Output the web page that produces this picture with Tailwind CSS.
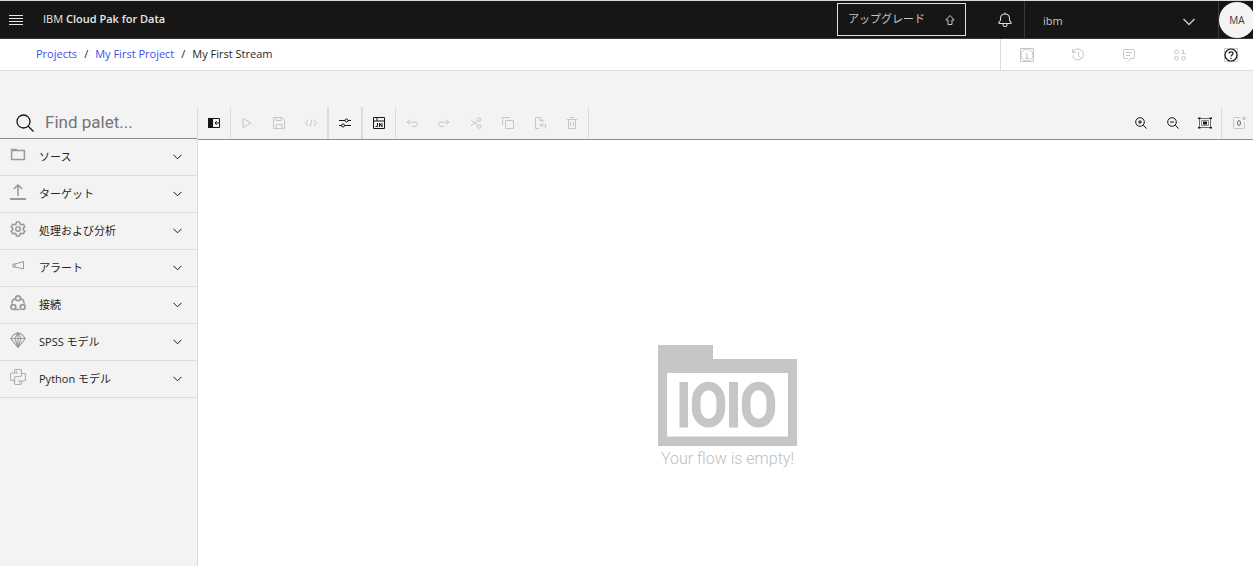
<!DOCTYPE html>
<html lang="ja">
<head>
    <meta charset="UTF-8">
    <meta name="viewport" content="width=device-width, initial-scale=1.0">
    <title>My First Stream</title>
    <script src="https://cdn.jsdelivr.net/npm/@tailwindcss/browser@4"></script>
</head>
<body class="h-screen flex flex-col overflow-hidden bg-[#f3f3f3] text-[#262626] text-[11px] font-['Open_Sans','Noto_Sans_CJK_JP',sans-serif]">
    <!-- ヘッダー -->
    <header class="flex items-stretch h-[39px] shrink-0 bg-[#161616] border-t border-t-[#d5dbd8] border-b border-b-[#393939] text-[#e8e8e8]">
        <button type="button" aria-label="メニュー" class="w-8 flex items-center justify-center">
            <svg class="w-[14px] h-[10px]" viewBox="0 0 14 10" stroke="currentColor"><path d="M0 .5h14M0 3.500h14M0 6.500h14M0 9.500h14"/></svg>
        </button>
        <a href="#" class="flex items-center pl-[11px]">IBM&nbsp;<b class="font-semibold">Cloud Pak for Data</b></a>
        <div class="ml-auto flex items-stretch">
            <button type="button" class="my-[2px] w-[129px] flex items-center justify-between border border-[#e0e0e0] pl-[10px] pr-[9px] text-[#c6c6c6]">
                <span>アップグレード</span>
                <svg class="size-3" viewBox="0 0 12 12" fill="none" stroke="currentColor"><path d="M6 1.500L1.800 6H4v4.500h4V6h2.200z"/></svg>
            </button>
            <button type="button" aria-label="通知" class="w-[58px] pl-5 flex items-center justify-center text-[#e0e0e0]">
                <svg class="size-4" viewBox="0 0 32 32" fill="currentColor"><path d="M28.700 19.300L26 16.600V13a10 10 0 0 0-9-9.950V1h-2v2.050A10 10 0 0 0 6 13v3.600l-2.700 2.700A1 1 0 0 0 3 20v3a1 1 0 0 0 1 1h7v1a5 5 0 0 0 10 0v-1h7a1 1 0 0 0 1-1v-3a1 1 0 0 0-.3-.7zM19 25a3 3 0 0 1-6 0v-1h6zm8-3H5v-1.600l2.700-2.700A1 1 0 0 0 8 17v-4a8 8 0 0 1 16 0v4a1 1 0 0 0 .3.7l2.700 2.700z"/></svg>
            </button>
            <button type="button" class="w-[195px] flex items-center justify-between border-x border-[#393939] pl-[18px] pr-[23px] pt-1 text-[#c6c6c6]">
                <span>ibm</span>
                <svg class="w-3 h-2" viewBox="0 0 12 8" fill="none" stroke="currentColor" stroke-width="1.500"><path d="M.5 1L6 6.500 11.500 1"/></svg>
            </button>
            <button type="button" class="-mr-[2px] mt-px size-9 rounded-full bg-[#f4f4f4] text-[#393939] text-[10px]">MA</button>
        </div>
    </header>

    <!-- パンくず -->
    <div class="flex items-stretch justify-between h-8 shrink-0 bg-white border-b border-[#dcdcdc]">
        <nav aria-label="Breadcrumb" class="flex items-center gap-[7px] pl-9">
            <a href="#" class="text-[#3d4fe8]">Projects</a>
            <span>/</span>
            <a href="#" class="text-[#3d4fe8]">My First Project</a>
            <span>/</span>
            <span>My First Stream</span>
        </nav>
        <div class="flex items-center gap-[37px] border-l border-[#dcdcdc] pl-[19px] pr-[15px] text-[#c6c6c6]">
            <button type="button" aria-label="情報">
                <svg class="size-[14px]" viewBox="0 0 14 14" fill="none" stroke="currentColor"><path d="M.5.5h13v13H.5z"/><circle cx="7" cy="7" r="6"/><path d="M5.500 6H7v4M5 10.500h4M6.500 4h1"/></svg>
            </button>
            <button type="button" aria-label="履歴">
                <svg class="size-[14px]" viewBox="0 0 14 14" fill="none" stroke="currentColor"><path d="M2 4a5.500 5.500 0 1 1-.5 3.500M1.500 1v3.500H5M7.500 3.500V7.500L10 10"/></svg>
            </button>
            <button type="button" aria-label="コメント">
                <svg class="size-[14px]" viewBox="0 0 14 14" fill="none" stroke="currentColor"><path d="M6.500 12.800L8.200 10.500H11.500a1 1 0 0 0 1-1V2.500a1 1 0 0 0-1-1h-9a1 1 0 0 0-1 1v7a1 1 0 0 0 1 1H6M4 4.500h6M4 7.500h4"/></svg>
            </button>
            <button type="button" aria-label="データ">
                <svg class="size-[14px]" viewBox="0 0 14 14" fill="none" stroke="currentColor"><circle cx="3.500" cy="3.700" r="1.900"/><circle cx="3.500" cy="10.300" r="1.900"/><circle cx="10.500" cy="10.300" r="1.900"/><path d="M9 2.500h1.500V6M8.500 5.500h4"/></svg>
            </button>
            <button type="button" aria-label="ヘルプ">
                <svg class="size-[14px]" viewBox="0 0 14 14" fill="none" stroke="currentColor"><path d="M.5.5h13v13H.5z"/><g stroke="#161616" stroke-width="1.200"><circle cx="7" cy="7" r="6"/><path d="M5 5.500C5 3.200 9 3.200 9 5.500 9 7 7 6.800 7 8.500M7 9.700v1.200"/></g></svg>
            </button>
        </div>
    </div>

    <div class="flex flex-1 min-h-0 pt-9">
        <!-- パレット -->
        <aside class="w-[198px] shrink-0 border-r border-[#dcdcdc]">
            <div class="flex items-center h-8 border-b border-[#8d8d8d] pl-4">
                <svg class="size-[18px] shrink-0" viewBox="0 0 18 18" fill="none" stroke="#161616" stroke-width="1.300"><circle cx="7.500" cy="7.500" r="6.500"/><path d="M12.200 12.200L17.500 17.500"/></svg>
                <input type="search" aria-label="Find palette" placeholder="Find palet..." class="min-w-0 flex-1 ml-[11px] bg-transparent font-['Roboto',sans-serif] text-[17px] outline-none placeholder:text-[#757575]">
            </div>
            <ul>
                <li class="h-[37px] border-b border-[#dcdcdc]">
                    <button type="button" class="size-full flex items-center pl-[10px] pr-[15px]">
                        <svg class="size-4 mb-1" viewBox="0 0 16 16" fill="none" stroke="#9a9a9a" stroke-width="1.500"><path d="M1.600 3.600h12.800v9H1.600zM1.600 3.600V2.400h4.500l1 1.200"/></svg>
                        <span class="ml-[13px]">ソース</span>
                        <svg class="w-[9px] h-[6px] ml-auto" viewBox="0 0 9 6" fill="none" stroke="#161616"><path d="M.5.8l4 4 4-4"/></svg>
                    </button>
                </li>
                <li class="h-[37px] border-b border-[#dcdcdc]">
                    <button type="button" class="size-full flex items-center pl-[10px] pr-[15px]">
                        <svg class="size-4 mb-1" viewBox="0 0 16 16" fill="none" stroke="#9a9a9a" stroke-width="1.600"><path d="M8 12V1.200M3.800 5L8 1l4.200 4"/><path d="M0 15h16" stroke-width="2"/></svg>
                        <span class="ml-[13px]">ターゲット</span>
                        <svg class="w-[9px] h-[6px] ml-auto" viewBox="0 0 9 6" fill="none" stroke="#161616"><path d="M.5.8l4 4 4-4"/></svg>
                    </button>
                </li>
                <li class="h-[37px] border-b border-[#dcdcdc]">
                    <button type="button" class="size-full flex items-center pl-[10px] pr-[15px]">
                        <svg class="size-4 mb-1" viewBox="0 0 16 16" fill="none" stroke="#9a9a9a" stroke-width="1.600" stroke-linejoin="round"><path d="M6.500 1h3l.5 2 1.300.8 2-.6 1.500 2.600L13.300 7.200v1.600l1.500 1.400-1.500 2.600-2-.6-1.300.8-.5 2h-3l-.5-2-1.300-.8-2 .6-1.500-2.600 1.500-1.400V7.200L1.200 5.800l1.500-2.600 2 .6L6 3z"/><circle cx="8" cy="8" r="2.200"/></svg>
                        <span class="ml-[13px]">処理および分析</span>
                        <svg class="w-[9px] h-[6px] ml-auto" viewBox="0 0 9 6" fill="none" stroke="#161616"><path d="M.5.8l4 4 4-4"/></svg>
                    </button>
                </li>
                <li class="h-[37px] border-b border-[#dcdcdc]">
                    <button type="button" class="size-full flex items-center pl-[10px] pr-[15px]">
                        <svg class="size-4 mb-1" viewBox="0 0 16 16" fill="none" stroke="#9a9a9a"><path d="M13.500 3.500v7.500L5 9H3V6h2zM5 6v3"/></svg>
                        <span class="ml-[13px]">アラート</span>
                        <svg class="w-[9px] h-[6px] ml-auto" viewBox="0 0 9 6" fill="none" stroke="#161616"><path d="M.5.8l4 4 4-4"/></svg>
                    </button>
                </li>
                <li class="h-[37px] border-b border-[#dcdcdc]">
                    <button type="button" class="size-full flex items-center pl-[10px] pr-[15px]">
                        <svg class="size-4 mb-1" viewBox="0 0 16 16" fill="none" stroke="#9a9a9a" stroke-width="1.700"><circle cx="8" cy="3.300" r="2.400"/><circle cx="3.300" cy="12" r="2.400"/><circle cx="12.700" cy="12" r="2.400"/><path d="M4.700 3.500Q1.800 5.500 1.600 8.500M11.300 3.500Q14.200 5.500 14.400 8.500M4 14.500h5.500"/></svg>
                        <span class="ml-[13px]">接続</span>
                        <svg class="w-[9px] h-[6px] ml-auto" viewBox="0 0 9 6" fill="none" stroke="#161616"><path d="M.5.8l4 4 4-4"/></svg>
                    </button>
                </li>
                <li class="h-[37px] border-b border-[#dcdcdc]">
                    <button type="button" class="size-full flex items-center pl-[10px] pr-[15px]">
                        <svg class="size-4 mb-1" viewBox="0 0 16 16" fill="none" stroke="#9a9a9a" stroke-width="1.100"><path d="M.7 6.500L4 2.500 8 .6l4 1.900 3.300 4L8 15.500zM.7 6.500h14.600M8 .6L5 6.500l3 9 3-9zM8 .6v15"/></svg>
                        <span class="ml-[13px]">SPSS モデル</span>
                        <svg class="w-[9px] h-[6px] ml-auto" viewBox="0 0 9 6" fill="none" stroke="#161616"><path d="M.5.8l4 4 4-4"/></svg>
                    </button>
                </li>
                <li class="h-[37px] border-b border-[#dcdcdc]">
                    <button type="button" class="size-full flex items-center pl-[10px] pr-[15px]">
                        <svg class="size-4 mb-1" viewBox="0 0 16 16" fill="none" stroke="#b0b0b0" stroke-width="1.200"><path d="M8 4H4.500V2Q4.500.5 6 .5h4q1.500 0 1.500 1.500v4q0 1.500-1.500 1.500H6Q4.500 7.500 4.500 9v2.500H2Q.5 11.500.5 10V5.500Q.5 4 2 4h3M8 12h3.500v2q0 1.500-1.500 1.500H6q-1.500 0-1.500-1.500v-3M11.500 4.500H14q1.500 0 1.500 1.500v4.500q0 1.500-1.500 1.500h-3M6 2.300h1M9 13.700h1"/></svg>
                        <span class="ml-[13px]">Python モデル</span>
                        <svg class="w-[9px] h-[6px] ml-auto" viewBox="0 0 9 6" fill="none" stroke="#161616"><path d="M.5.8l4 4 4-4"/></svg>
                    </button>
                </li>
            </ul>
        </aside>

        <div class="flex-1 min-w-0 flex flex-col">
            <!-- ツールバー -->
            <div class="flex items-stretch h-[33px] shrink-0 border-b border-[#8d8d8d] text-[#c6c6c6]">
                <button type="button" aria-label="パレットを閉じる" class="w-[33px] flex items-center justify-center border-r border-[#dcdcdc] text-[#161616]">
                    <svg class="w-3 h-[10px]" viewBox="0 0 12 10"><path d="M0 0h5v10H0z" fill="currentColor"/><path d="M5 .5h6.500v9H5M11 5H7M8.700 3.200L7 5l1.700 1.800" fill="none" stroke="currentColor"/></svg>
                </button>
                <button type="button" aria-label="実行" class="w-8 flex items-center justify-center">
                    <svg class="size-3" viewBox="0 0 12 12" fill="none" stroke="currentColor"><path d="M2 1.500v9L10 6z"/></svg>
                </button>
                <button type="button" aria-label="保存" class="w-8 flex items-center justify-center">
                    <svg class="size-3" viewBox="0 0 12 12" fill="none" stroke="currentColor"><path d="M.5.5H9L11.500 3v8.500H.5zM3 .5v3h5v-3M3 11.500v-4h6v4"/></svg>
                </button>
                <button type="button" aria-label="コード" class="w-[34px] flex items-center justify-center border-r-2 border-[#dcdcdc]">
                    <svg class="size-3" viewBox="0 0 12 12" fill="none" stroke="currentColor"><path d="M3 3L.6 6 3 9M9 3l2.400 3L9 9M7 2.500l-2 7"/></svg>
                </button>
                <button type="button" aria-label="設定" class="w-[34px] flex items-center justify-center border-r-2 border-[#dcdcdc] text-[#161616]">
                    <svg class="size-3" viewBox="0 0 12 12" fill="none" stroke="currentColor"><path d="M0 3.500h6M9 3.500h3M0 8.500h2.500M5.500 8.500H12"/><circle cx="7.500" cy="3.500" r="1.500"/><circle cx="4" cy="8.500" r="1.500"/></svg>
                </button>
                <button type="button" aria-label="ノートブック" class="w-[33px] flex items-center justify-center border-r border-[#dcdcdc] text-[#161616]">
                    <svg class="size-3" viewBox="0 0 12 12" fill="none" stroke="currentColor"><path d="M.5.5h11v11H.5zM.5 4h11M4 .5V4M4.500 6v3.500h-2M6.500 10V6L9 10V6"/></svg>
                </button>
                <button type="button" aria-label="元に戻す" class="w-8 flex items-center justify-center">
                    <svg class="size-3" viewBox="0 0 12 12" fill="none" stroke="currentColor"><path d="M3.500 2.500L1 5l2.500 2.500M1 5h8q2.500.2 2.500 2.200T9 9.500H6"/></svg>
                </button>
                <button type="button" aria-label="やり直し" class="w-8 flex items-center justify-center">
                    <svg class="size-3" viewBox="0 0 12 12" fill="none" stroke="currentColor"><path d="M8.500 2.500L11 5 8.500 7.500M11 5H3Q.5 5.200.5 7.200T3 9.500h3"/></svg>
                </button>
                <button type="button" aria-label="切り取り" class="w-8 flex items-center justify-center">
                    <svg class="size-3" viewBox="0 0 12 12" fill="none" stroke="currentColor"><circle cx="9.300" cy="2.500" r="1.700"/><circle cx="9.300" cy="9.500" r="1.700"/><path d="M1 3l7 5.500M1 9l7-5.500"/></svg>
                </button>
                <button type="button" aria-label="コピー" class="w-8 flex items-center justify-center">
                    <svg class="size-3" viewBox="0 0 12 12" fill="none" stroke="currentColor"><path d="M3.500 3.500h8v8h-8zM.5 8V.5H8"/></svg>
                </button>
                <button type="button" aria-label="貼り付け" class="w-8 flex items-center justify-center">
                    <svg class="size-3" viewBox="0 0 12 12" fill="none" stroke="currentColor"><path d="M5 11.500H1.500V.5H6L9 3.500V5M6 .5v3h3M8 6L6 8l2 2M6 8h5.500v3.500"/></svg>
                </button>
                <button type="button" aria-label="削除" class="w-[33px] flex items-center justify-center border-r border-[#dcdcdc]">
                    <svg class="size-3" viewBox="0 0 12 12" fill="none" stroke="currentColor"><path d="M1 2.500h10M4 .5h4M2.500 2.500v9h7v-9M4.500 5v4M7.500 5v4"/></svg>
                </button>
                <div class="ml-auto flex items-stretch text-[#161616]">
                    <button type="button" aria-label="拡大" class="w-8 flex items-center justify-center">
                        <svg class="size-3" viewBox="0 0 12 12" fill="none" stroke="currentColor"><circle cx="5" cy="5" r="4.300"/><path d="M8.200 8.200l3.400 3.400M3 5h4M5 3v4"/></svg>
                    </button>
                    <button type="button" aria-label="縮小" class="w-8 flex items-center justify-center">
                        <svg class="size-3" viewBox="0 0 12 12" fill="none" stroke="currentColor"><circle cx="5" cy="5" r="4.300"/><path d="M8.200 8.200l3.400 3.400M3 5h4"/></svg>
                    </button>
                    <button type="button" aria-label="全体表示" class="w-[33px] flex items-center justify-center border-r border-[#dcdcdc]">
                        <svg class="w-[14px] h-3" viewBox="0 0 14 12"><path d="M1.500 1.500h11v9h-11z" fill="none" stroke="#6f6f6f"/><path d="M3.500 3.500h7v5h-7z" fill="none" stroke="#8d8d8d"/><path d="M5 4.500h4v3H5zM0 .5h2.500V2H0zM11.500.5H14V2h-2.500zM0 10h2.500v1.500H0zM11.500 10H14v1.500h-2.500z" fill="currentColor"/></svg>
                    </button>
                    <button type="button" aria-label="通知 0 件" class="w-[31px] pl-[3px] flex items-center justify-center">
                        <svg class="size-[14px]" viewBox="0 0 14 14" fill="none" stroke="#c6c6c6"><path d="M8.500 1.500H2.500a1 1 0 0 0-1 1v9a1 1 0 0 0 1 1h9a1 1 0 0 0 1-1V6"/><circle cx="12" cy="2.500" r="1.700" fill="#c6c6c6" stroke="none"/><ellipse cx="7" cy="7" rx="1.500" ry="2.500" stroke="#6f6f6f"/></svg>
                    </button>
                </div>
            </div>
            <!-- キャンバス -->
            <main class="flex-1 flex flex-col items-center bg-white pt-[205px] pl-1">
                <svg class="w-[139px] h-[101px]" viewBox="0 0 139 101" fill="#c6c6c6">
                    <path fill-rule="evenodd" d="M0 0h55v14h84v87H0zM9 28v63.500h121V28z"/>
                    <rect x="21.500" y="37" width="8.500" height="45.500"/>
                    <rect x="38.200" y="41" width="24.600" height="37.200" rx="12" ry="15" fill="none" stroke="#c6c6c6" stroke-width="8.700"/>
                    <rect x="71" y="37" width="9" height="45.500"/>
                    <rect x="88.200" y="41" width="24.600" height="37.200" rx="12" ry="15" fill="none" stroke="#c6c6c6" stroke-width="8.700"/>
                </svg>
                <p class="mt-px text-base font-light font-['Roboto',sans-serif] text-[#bebebe]">Your flow is empty!</p>
            </main>
        </div>
    </div>
</body>
</html>
